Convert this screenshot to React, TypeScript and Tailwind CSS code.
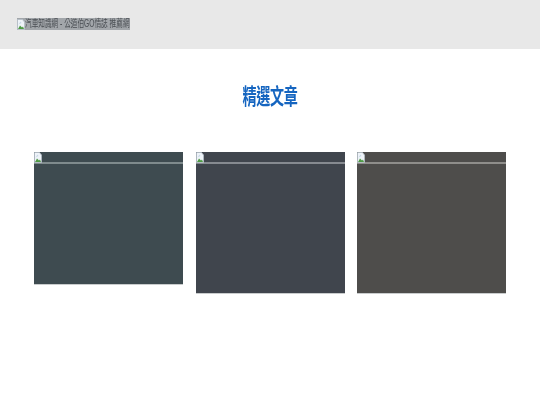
const cjk = '"Liberation Sans", "Noto Sans CJK TC", sans-serif';

function BrokenImage() {
  return (
    <svg width="8" height="11" viewBox="0 0 8 11" className="shrink-0 blur-[0.3px]">
      <path d="M0.5 0.5H5.5L7.5 3V10.5H0.5Z" fill="#eef3f8" stroke="#b4bcc6" strokeWidth="0.8" />
      <path d="M1 10L3 6.5L5 8.5L6 7.5L7 10Z" fill="#4f9a45" />
      <path d="M1.5 5.5L3.5 2.5L4.5 4Z" fill="#c7d6e6" />
    </svg>
  );
}

const CARDS = [
  { bg: 'bg-[#3e4b50]', border: 'border-[#7f8b8d]', h: 'h-[133px]' },
  { bg: 'bg-[#40454d]', border: 'border-[#868a90]', h: 'h-[142px]' },
  { bg: 'bg-[#4e4d4b]', border: 'border-[#8f8e8b]', h: 'h-[142px]' },
];

export default function App() {
  return (
    <div className="min-h-[405px] bg-white" style={{ fontFamily: cjk }}>
      {/* Header */}
      <header className="h-[49px] bg-[#e8e8e8] pl-[17px] pt-[18px]">
        <div className="flex h-[12px] w-[113px] items-center bg-[#a2a6aa] text-[10px] leading-[12px] text-[#4a4e53]">
          <BrokenImage />
          <span className="origin-left scale-x-[0.665] whitespace-nowrap blur-[0.3px]">汽車知識網 - 公道伯GO情誌 推薦網</span>
        </div>
      </header>

      {/* Title */}
      <h2 className="mt-[35px] scale-x-[0.64] text-center text-[22px] font-bold leading-[25px] tracking-[-0.5px] text-[#1565c0] blur-[0.3px]">
        精選文章
      </h2>

      {/* Cards */}
      <div className="mt-[43px] flex items-start gap-[12.5px] px-[34px]">
        {CARDS.map((c, i) => (
          <div key={i} className={`w-[149px] ${c.h} ${c.bg} border-b border-[#c9cccd]`}>
            <div className={`h-[12px] border-b-2 ${c.border}`}>
              <BrokenImage />
            </div>
          </div>
        ))}
      </div>
    </div>
  );
}
